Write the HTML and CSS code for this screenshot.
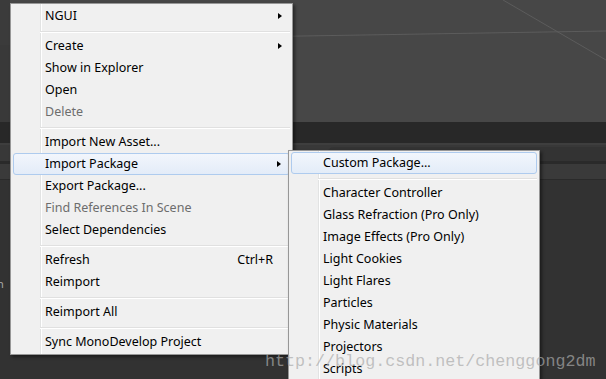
FILE: index.html
```html
<!DOCTYPE html>
<html lang="en">
<head>
  <meta charset="UTF-8" />
  <title>Unity - Import Package</title>
  <link rel="stylesheet" href="styles.css">
</head>
<body>

  <div class="editor">
    <div class="scene">
      <div class="scene-side"></div>
      <svg class="grid" width="606" height="122" viewBox="0 0 606 122">
        <line x1="0" y1="41" x2="606" y2="31" stroke="#5c5c5c" stroke-width="1" />
        <line x1="503" y1="0" x2="606" y2="60" stroke="#5c5c5c" stroke-width="1" />
      </svg>
    </div>
    <div class="toolbar"></div>
    <div class="searchbar"><div class="search-field"></div></div>
    <div class="tabbar"></div>
    <div class="panel">
      <span class="cut-label">n</span>
    </div>
  </div>

  <ul class="menu menu-main">
    <li class="item">NGUI<span class="arrow"></span></li>
    <li class="sep"></li>
    <li class="item">Create<span class="arrow"></span></li>
    <li class="item">Show in Explorer</li>
    <li class="item">Open</li>
    <li class="item disabled">Delete</li>
    <li class="sep"></li>
    <li class="item">Import New Asset...</li>
    <li class="item active">Import Package<span class="arrow"></span></li>
    <li class="item">Export Package...</li>
    <li class="item disabled">Find References In Scene</li>
    <li class="item">Select Dependencies</li>
    <li class="sep"></li>
    <li class="item">Refresh<span class="shortcut">Ctrl+R</span></li>
    <li class="item">Reimport</li>
    <li class="sep"></li>
    <li class="item">Reimport All</li>
    <li class="sep"></li>
    <li class="item">Sync MonoDevelop Project</li>
  </ul>

  <ul class="menu menu-sub">
    <li class="item active">Custom Package...</li>
    <li class="sep"></li>
    <li class="item">Character Controller</li>
    <li class="item">Glass Refraction (Pro Only)</li>
    <li class="item">Image Effects (Pro Only)</li>
    <li class="item">Light Cookies</li>
    <li class="item">Light Flares</li>
    <li class="item">Particles</li>
    <li class="item">Physic Materials</li>
    <li class="item">Projectors</li>
    <li class="item">Scripts</li>
  </ul>

  <div class="watermark">http://blog.csdn.net/chenggong2dm</div>

</body>
</html>
```

FILE: styles.css
```css
html, body {
  margin: 0;
  padding: 0;
  width: 606px;
  height: 379px;
  overflow: hidden;
}
body {
  background: #323232;
  font-family: 'Noto Sans', 'Liberation Sans', sans-serif;
  position: relative;
}
.editor {
  display: flex;
  flex-direction: column;
  height: 379px;
}
.scene {
  height: 122px;
  background: #474747;
  position: relative;
}
.scene-side {
  position: absolute;
  left: 0;
  top: 0;
  width: 10px;
  height: 122px;
  background: #393939;
  border-top: 45px solid #3b3b3b;
  box-sizing: border-box;
}
.grid {
  display: block;
}
.toolbar {
  height: 21px;
  background: #282828;
}
.searchbar {
  height: 16px;
  background: #383838;
  border-top: 2px solid #3e3e3e;
  padding-left: 327px;
}
.search-field {
  height: 14px;
  margin-top: 2px;
  border-radius: 7px 0 0 0;
  background: #333;
}
.tabbar {
  height: 15px;
  background: #3a3a3a;
  border-top: 3px solid #2a2a2a;
  border-bottom: 1px solid #2a2a2a;
}
.panel {
  flex: 1;
  background: #323232;
  padding-top: 98px;
}
.cut-label {
  display: block;
  margin-left: -3px;
  font-size: 11px;
  color: #a8a8a8;
  line-height: 12px;
}

/* context menus */
.menu {
  position: absolute;
  margin: 0;
  padding: 1px 0;
  list-style: none;
  box-sizing: border-box;
  border: 1px solid #979797;
  background: linear-gradient(to right, #f0f0f0 29px, #e2e3e3 29px, #e2e3e3 30px, #fff 30px, #fff 31px, #f0f0f0 31px);
  box-shadow: 2px 2px 3px rgba(0,0,0,0.45);
  font-size: 12.5px;
  color: #000;
}
.menu-main {
  left: 10px;
  top: 3px;
  width: 283px;
}
.menu-sub {
  left: 288px;
  top: 150px;
  width: 252px;
}
.item {
  height: 22px;
  margin: 0 2px;
  padding: 0 8px 0 32px;
  display: flex;
  align-items: center;
  box-sizing: border-box;
  white-space: nowrap;
  line-height: 20px;
}
.item.disabled {
  color: #6d6d6d;
}
.item.active {
  border: 1px solid #aecbee;
  border-radius: 3px;
  padding-left: 31px;
  background: linear-gradient(#f2f6fc, #e3ecf8);
}
.arrow {
  margin-left: auto;
  width: 0;
  height: 0;
  border-left: 4px solid #000;
  border-top: 3.5px solid transparent;
  border-bottom: 3.5px solid transparent;
}
.shortcut {
  margin-left: auto;
  margin-right: 9px;
}
.sep {
  height: 8px;
  margin: 0 2px 0 29px;
  background: linear-gradient(transparent 4px, #e0e0e0 4px, #e0e0e0 5px, #fff 5px, #fff 6px, transparent 6px);
}

.watermark {
  position: absolute;
  left: 265px;
  top: 352px;
  font-family: 'Liberation Mono', monospace;
  font-size: 16.7px;
  line-height: 20px;
  color: rgba(170,170,170,0.7);
  white-space: nowrap;
}
```
